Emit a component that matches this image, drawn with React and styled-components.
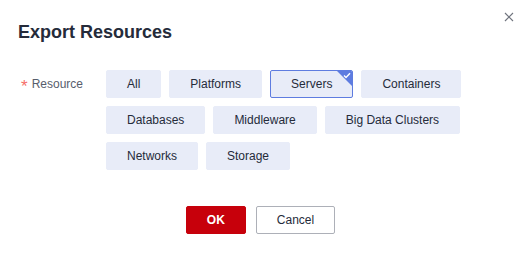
import styled, { createGlobalStyle } from "styled-components";

const GlobalStyle = createGlobalStyle`
  body {
    margin: 0;
    background: #ffffff;
    font-family: "Liberation Sans", Arial, sans-serif;
    color: #252b3a;
  }
`;

const Dialog = styled.div`
  position: relative;
  width: 521px;
  height: 257px;
  box-sizing: border-box;
  padding: 22px 18px 0 18px;
  background: #fff;
`;

const Title = styled.h2`
  margin: 0;
  font-size: 18px;
  line-height: 21px;
  font-weight: 700;
  color: #252b3a;
`;

const CloseButton = styled.button`
  position: absolute;
  top: 11px;
  right: 6px;
  width: 12px;
  height: 12px;
  padding: 0;
  border: 0;
  background: none;
  display: flex;
  align-items: center;
  justify-content: center;
  cursor: pointer;
`;

const FormRow = styled.div`
  display: flex;
  margin-top: 27px;
`;

const Label = styled.div`
  width: 88px;
  box-sizing: border-box;
  flex-shrink: 0;
  display: flex;
  align-items: center;
  height: 28px;
  padding-left: 3px;
  font-size: 12px;
  color: #575d6c;
`;

const Star = styled.span`
  color: #f66f6a;
  font-size: 17px;
  line-height: 1;
  margin-right: 4px;
  margin-top: 5px;
`;

const Options = styled.div`
  display: flex;
  flex-wrap: wrap;
  gap: 8px;
  width: 360px;
`;

const Option = styled.button`
  position: relative;
  height: 28px;
  box-sizing: border-box;
  padding: 0 20px;
  border: 1px solid ${(p) => (p.$selected ? "#5e7ce0" : "#e8ecf8")};
  border-radius: 2px;
  background: #e8ecf8;
  font-family: "Liberation Sans", Arial, sans-serif;
  font-size: 12px;
  color: #252b3a;
  overflow: hidden;
  cursor: pointer;
`;

const Corner = styled.span`
  position: absolute;
  top: 0;
  right: 0;
  width: 0;
  height: 0;
  border-top: 15px solid #5e7ce0;
  border-left: 15px solid transparent;
`;

const CornerCheck = styled.svg`
  position: absolute;
  top: 1px;
  right: 1px;
`;

const Footer = styled.div`
  display: flex;
  justify-content: center;
  gap: 10px;
  margin-top: 36px;
`;

const FooterButton = styled.button`
  height: 28px;
  box-sizing: border-box;
  padding: 0 20px;
  border-radius: 2px;
  font-family: "Liberation Sans", Arial, sans-serif;
  font-size: 12px;
  cursor: pointer;
  border: 1px solid ${(p) => (p.$primary ? "#c7000b" : "#adb0b8")};
  background: ${(p) => (p.$primary ? "#c7000b" : "#fff")};
  color: ${(p) => (p.$primary ? "#fff" : "#252b3a")};
  font-weight: ${(p) => (p.$primary ? 700 : 400)};
`;

const resources = [
  "All",
  "Platforms",
  "Servers",
  "Containers",
  "Databases",
  "Middleware",
  "Big Data Clusters",
  "Networks",
  "Storage",
];

export default function App() {
  const selected = "Servers";
  return (
    <>
      <GlobalStyle />
      <Dialog>
        <CloseButton aria-label="Close">
          <svg width="10" height="10" viewBox="0 0 10 10">
            <path d="M1 1L9 9M9 1L1 9" stroke="#71757f" strokeWidth="1.2" />
          </svg>
        </CloseButton>
        <Title>Export Resources</Title>
        <FormRow>
          <Label>
            <Star>*</Star>Resource
          </Label>
          <Options>
            {resources.map((r) => (
              <Option key={r} $selected={r === selected}>
                {r}
                {r === selected && (
                  <>
                    <Corner />
                    <CornerCheck width="8" height="7" viewBox="0 0 8 7">
                      <path
                        d="M1 3.5L3 5.5L7 1.2"
                        stroke="#fff"
                        strokeWidth="1.4"
                        fill="none"
                      />
                    </CornerCheck>
                  </>
                )}
              </Option>
            ))}
          </Options>
        </FormRow>
        <Footer>
          <FooterButton $primary>OK</FooterButton>
          <FooterButton>Cancel</FooterButton>
        </Footer>
      </Dialog>
    </>
  );
}
